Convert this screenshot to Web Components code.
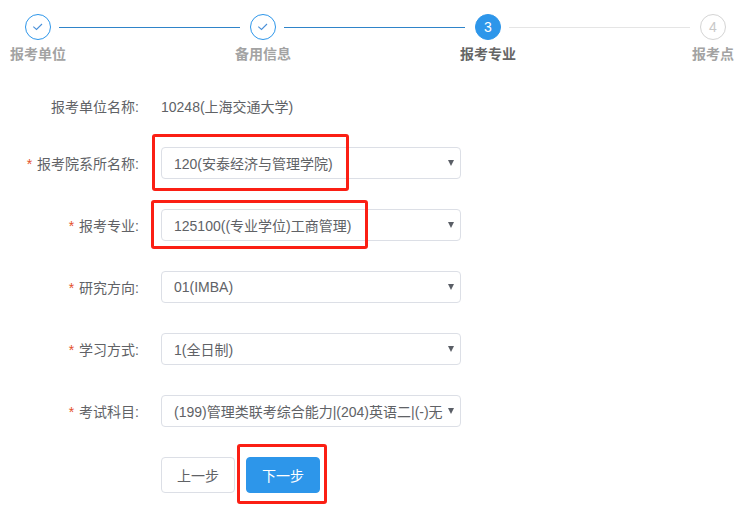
<!DOCTYPE html>
<html lang="zh">
<head>
<meta charset="utf-8">
<title>报考专业</title>
<style>
html, body { margin: 0; padding: 0; background: #fff; }
body { width: 744px; height: 510px; overflow: hidden; position: relative; font-family: "Liberation Sans", "Noto Sans CJK SC", sans-serif; font-size: 14px; color: #606266; }
</style>
</head>
<body>
<step-bar>
  <step-item state="done" label="报考单位"></step-item>
  <step-item state="done" label="备用信息"></step-item>
  <step-item state="active" num="3" label="报考专业"></step-item>
  <step-item state="todo" num="4" label="报考点" last></step-item>
</step-bar>
<apply-form>
  <form-row label="报考单位名称:" plain>10248(上海交通大学)</form-row>
  <form-row label="报考院系所名称:" required><select-box>120(安泰经济与管理学院)</select-box></form-row>
  <form-row label="报考专业:" required><select-box>125100((专业学位)工商管理)</select-box></form-row>
  <form-row label="研究方向:" required><select-box>01(IMBA)</select-box></form-row>
  <form-row label="学习方式:" required><select-box>1(全日制)</select-box></form-row>
  <form-row label="考试科目:" required><select-box>(199)管理类联考综合能力|(204)英语二|(-)无</select-box></form-row>
  <form-actions></form-actions>
</apply-form>
<mark-box style="left:152px;top:134px;width:197px;height:57px"></mark-box>
<mark-box style="left:151px;top:200px;width:217px;height:49px"></mark-box>
<mark-box style="left:237px;top:444px;width:90px;height:60px"></mark-box>
<script>
class StepBar extends HTMLElement {
	constructor() {
		super();
		this.attachShadow({ mode: "open" });
		this.shadowRoot.innerHTML = `
    <style>
    :host { display: flex; padding: 14px 0 0 25px; }
    </style>
    <slot></slot>`;
	}
}
class StepItem extends HTMLElement {
	constructor() {
		super();
		this.attachShadow({ mode: "open" });
	}
	connectedCallback() {
		const state = this.getAttribute("state");
		const num = this.getAttribute("num") || "";
		const check = `<svg width="12" height="12" viewBox="0 0 12 12"><path d="M1.3 5.7 4.5 8.5 10 3" fill="none" stroke="#4a90d9" stroke-width="1.1"/></svg>`;
		this.shadowRoot.innerHTML = `
    <style>
    :host { display: block; width: 225px; flex: none; }
    :host([last]) { width: 26px; }
    .head { display: flex; align-items: center; height: 26px; }
    .dot {
      width: 26px; height: 26px; box-sizing: border-box; border-radius: 50%; flex: none;
      display: flex; align-items: center; justify-content: center;
      border: 1px solid #2d96ea; font-size: 14px; line-height: 1;
    }
    .active .dot { background: #2d96ea; color: #fff; }
    .todo .dot { border-color: #d4d4d4; color: #c8c8c8; }
    .line { flex: 1; height: 1px; margin: 0 10px 0 8px; background: #2f84c9; }
    .active .line { background: #e5e5e5; }
    :host([last]) .line { display: none; }
    .label {
      width: 76px; margin: 4px 0 0 -25px; text-align: center; white-space: nowrap;
      font-size: 14px; font-weight: bold; line-height: 20px; color: #a3a3a3;
    }
    .active .label { color: #666; }
    </style>
    <div class="${state}">
      <div class="head"><span class="dot">${state === "done" ? check : num}</span><span class="line"></span></div>
      <div class="label">${this.getAttribute("label")}</div>
    </div>`;
	}
}
class ApplyForm extends HTMLElement {
	constructor() {
		super();
		this.attachShadow({ mode: "open" });
		this.shadowRoot.innerHTML = `
    <style>
    :host { display: flex; flex-direction: column; gap: 30px; padding: 26px 0 0 0; }
    </style>
    <slot></slot>`;
	}
}
class FormRow extends HTMLElement {
	constructor() {
		super();
		this.attachShadow({ mode: "open" });
	}
	connectedCallback() {
		const req = this.hasAttribute("required") ? `<span class="star">*</span>` : "";
		this.shadowRoot.innerHTML = `
    <style>
    :host { display: flex; align-items: center; height: 32px; color: #606266; }
    :host([plain]) { margin-bottom: -5px; }
    .name { width: 139px; padding-right: 2px; flex: none; text-align: right; white-space: nowrap; }
    .star { color: #e4502b; margin-right: 5px; }
    .value { margin-left: 20px; width: 300px; }
    </style>
    <div class="name">${req}${this.getAttribute("label")}</div>
    <div class="value"><slot></slot></div>`;
	}
}
class SelectBox extends HTMLElement {
	constructor() {
		super();
		this.attachShadow({ mode: "open" });
		this.shadowRoot.innerHTML = `
    <style>
    :host {
      display: flex; align-items: center; box-sizing: border-box; height: 32px; width: 300px;
      border: 1px solid #dcdfe6; border-radius: 4px; padding: 0 6px 0 12px; color: #606266;
    }
    .text { flex: 1; white-space: nowrap; overflow: hidden; }
    .arrow { flex: none; width: 0; height: 0; margin: 0 0 1px 1px;
      border-left: 3px solid transparent; border-right: 3px solid transparent; border-top: 6px solid #5a5e66; }
    </style>
    <span class="text"><slot></slot></span><span class="arrow"></span>`;
	}
}
class FormActions extends HTMLElement {
	constructor() {
		super();
		this.attachShadow({ mode: "open" });
		this.shadowRoot.innerHTML = `
    <style>
    :host { display: flex; gap: 11px; padding-left: 161px; }
    button {
      width: 74px; height: 36px; box-sizing: border-box; border-radius: 4px; font: inherit;
      border: 1px solid #dcdfe6; background: #fff; color: #606266; padding: 0;
    }
    .next { background: #2d96ea; border-color: #2d96ea; color: #fff; }
    </style>
    <button>上一步</button><button class="next">下一步</button>`;
	}
}
class MarkBox extends HTMLElement {
	constructor() {
		super();
		this.attachShadow({ mode: "open" });
		this.shadowRoot.innerHTML = `
    <style>
    :host { display: block; position: absolute; box-sizing: border-box; border: 3px solid #fb1f14; border-radius: 3px; }
    </style>`;
	}
}
customElements.define("step-bar", StepBar);
customElements.define("step-item", StepItem);
customElements.define("apply-form", ApplyForm);
customElements.define("form-row", FormRow);
customElements.define("select-box", SelectBox);
customElements.define("form-actions", FormActions);
customElements.define("mark-box", MarkBox);
</script>
</body>
</html>
